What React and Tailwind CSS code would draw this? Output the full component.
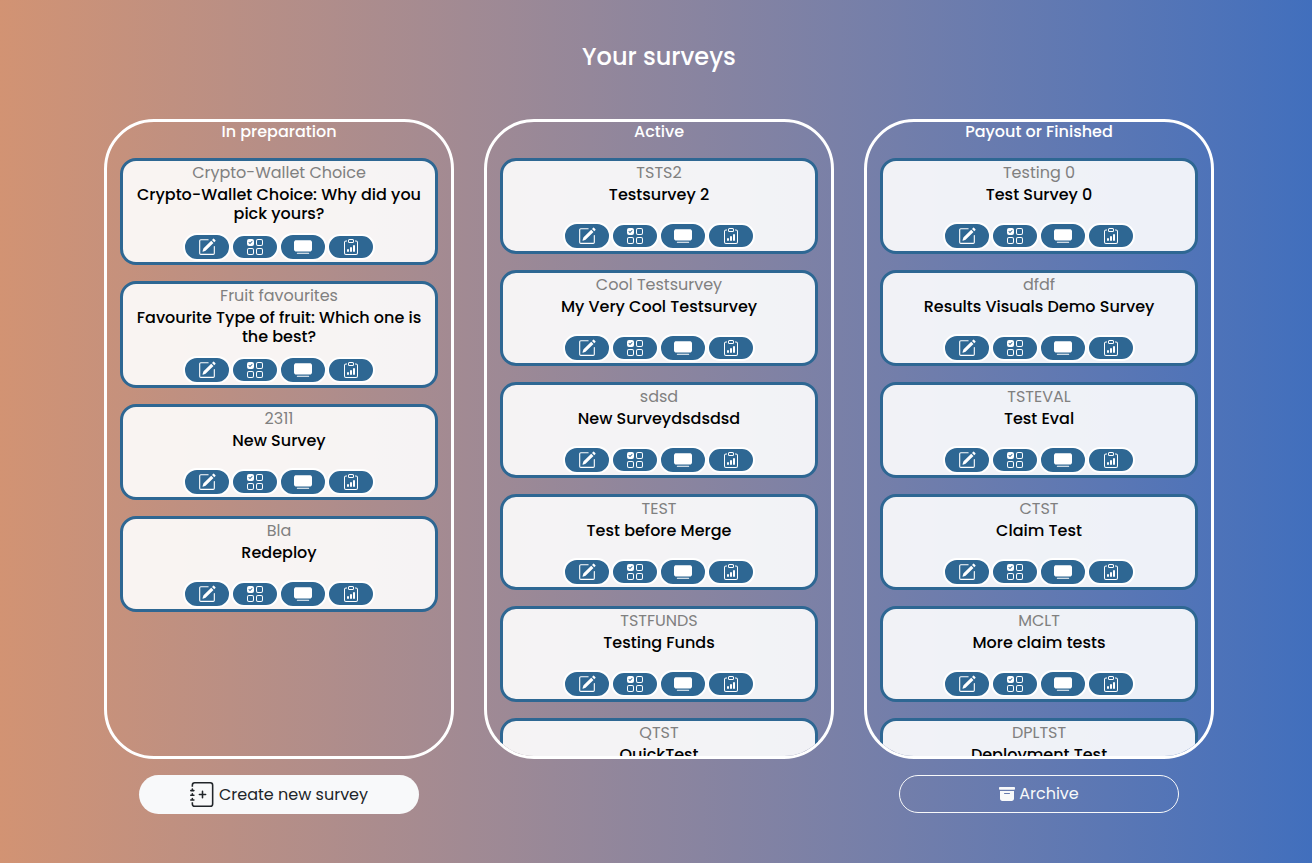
import {
  BsArchiveFill,
  BsClipboardData,
  BsJournalPlus,
  BsPencilSquare,
  BsTvFill,
  BsUiChecksGrid,
} from "react-icons/bs";

const columns = [
  {
    title: "In preparation",
    action: "create",
    surveys: [
      ["Crypto-Wallet Choice", "Crypto-Wallet Choice: Why did you pick yours?"],
      ["Fruit favourites", "Favourite Type of fruit: Which one is the best?"],
      ["2311", "New Survey"],
      ["Bla", "Redeploy"],
    ],
  },
  {
    title: "Active",
    surveys: [
      ["TSTS2", "Testsurvey 2"],
      ["Cool Testsurvey", "My Very Cool Testsurvey"],
      ["sdsd", "New Surveydsdsdsd"],
      ["TEST", "Test before Merge"],
      ["TSTFUNDS", "Testing Funds"],
      ["QTST", "QuickTest"],
    ],
  },
  {
    title: "Payout or Finished",
    action: "archive",
    surveys: [
      ["Testing 0", "Test Survey 0"],
      ["dfdf", "Results Visuals Demo Survey"],
      ["TSTEVAL", "Test Eval"],
      ["CTST", "Claim Test"],
      ["MCLT", "More claim tests"],
      ["DPLTST", "Deployment Test"],
    ],
  },
];

const tools = [
  { label: "Edit", Icon: BsPencilSquare, size: "h-7", icon: "size-[18px]" },
  { label: "Questions", Icon: BsUiChecksGrid, size: "h-[26px]", icon: "size-4" },
  { label: "Present", Icon: BsTvFill, size: "h-7", icon: "size-[18px]" },
  { label: "Results", Icon: BsClipboardData, size: "h-[26px]", icon: "size-4" },
];

function SurveyCard({ code, title }) {
  return (
    <li className="shrink-0 rounded-2xl border-3 border-[#2e6793] bg-white/90 px-2 pb-px text-center">
      <p className="leading-6 text-[#808080]">{code}</p>
      <h3 className="min-h-[27px] leading-[19px] font-medium text-black">{title}</h3>
      <div className="mt-2.5 flex items-center justify-center">
        {tools.map(({ label, Icon, size, icon }) => (
          <button
            key={label}
            type="button"
            aria-label={`${label}: ${title}`}
            className={`flex w-12 items-center justify-center rounded-full border-2 border-white bg-[#2e6793] text-white ${size}`}
          >
            <Icon className={icon} />
          </button>
        ))}
      </div>
    </li>
  );
}

function Column({ title, surveys, action }) {
  return (
    <section className="flex w-full max-w-[350px] flex-col items-center">
      <div className="h-[640px] w-full overflow-y-auto rounded-[50px] border-3 border-white px-[13px] [scrollbar-width:none]">
        <h2 className="text-center leading-[19px] font-medium text-white">{title}</h2>
        <ul className="mt-[17px] flex flex-col gap-4 pb-4">
          {surveys.map(([code, name]) => (
            <SurveyCard key={code} code={code} title={name} />
          ))}
        </ul>
      </div>
      {action === "create" && (
        <button
          type="button"
          className="mt-4 flex h-[39px] w-4/5 items-center justify-center gap-1 rounded-full bg-[#f8f9fa] text-[#212529]"
        >
          <BsJournalPlus className="size-[25px]" />
          Create new survey
        </button>
      )}
      {action === "archive" && (
        <button
          type="button"
          className="mt-4 flex h-[38px] w-4/5 items-center justify-center gap-1 rounded-full border border-[#f8f9fa] text-[#f8f9fa]"
        >
          <BsArchiveFill className="size-4" />
          Archive
        </button>
      )}
    </section>
  );
}

export default function App() {
  return (
    <main className="min-h-screen bg-linear-to-r from-[#d29373] to-[#416fbd] pt-[41px] pb-12 pl-1.5 font-['Poppins','Inter',sans-serif] text-base">
      <h1 className="text-center text-2xl leading-8 font-medium text-white">Your surveys</h1>
      <div className="mt-[46px] flex items-start justify-center gap-[30px]">
        {columns.map((column) => (
          <Column key={column.title} {...column} />
        ))}
      </div>
    </main>
  );
}
